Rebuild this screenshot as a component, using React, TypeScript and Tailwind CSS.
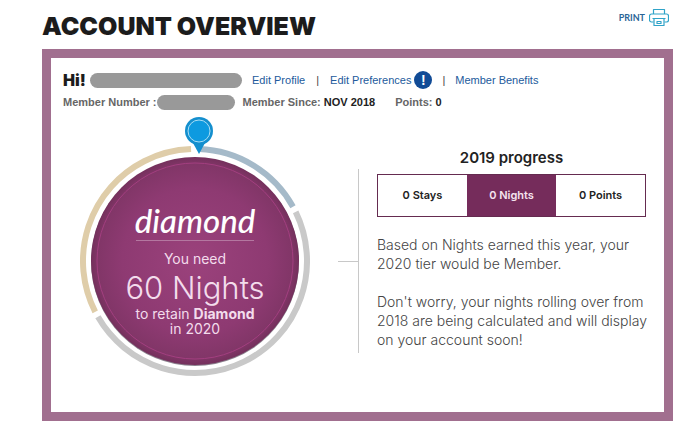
import type { FC } from "react";

const tabs = [
  { label: "0 Stays", active: false },
  { label: "0 Nights", active: true },
  { label: "0 Points", active: false },
];

// start angle and sweep in degrees, clockwise from the top
const arcs = [
  { color: "#a5bac9", start: 2, sweep: 59 },
  { color: "#c9c9c9", start: 64, sweep: 176 },
  { color: "#dfcda9", start: 243, sweep: 115 },
];

const PrinterIcon: FC = () => (
  <svg
    className="h-5 w-5"
    viewBox="0 0 20 20"
    fill="none"
    stroke="#2fa3c8"
    strokeWidth="1.2"
    strokeLinejoin="round"
    aria-hidden="true"
  >
    <path d="M4.5 6V1.5h11V6" />
    <path d="M4.5 14H2.5a2 2 0 0 1-2-2V8a2 2 0 0 1 2-2h15a2 2 0 0 1 2 2v4a2 2 0 0 1-2 2h-2" />
    <path d="M5 10.5h10v7H5zM3.5 10.5h13M8 13.5h4v2H8z" />
  </svg>
);

const Dial: FC = () => (
  <div className="relative h-[261px] w-[230px] shrink-0">
    <svg className="h-full w-full" viewBox="0 0 230 261" aria-hidden="true">
      <defs>
        <radialGradient id="plum">
          <stop offset="0" stopColor="#9b427c" />
          <stop offset="0.7" stopColor="#8e3a72" />
          <stop offset="0.93" stopColor="#823668" />
          <stop offset="1" stopColor="#74305c" />
        </radialGradient>
      </defs>
      {arcs.map((arc) => (
        <circle
          key={arc.color}
          cx="115"
          cy="145"
          r="112"
          fill="none"
          stroke={arc.color}
          strokeWidth="6"
          pathLength="360"
          strokeDasharray={`${arc.sweep} ${360 - arc.sweep}`}
          transform={`rotate(${arc.start - 90} 115 145)`}
        />
      ))}
      <circle cx="115" cy="146" r="104" fill="#8d8590" />
      <circle cx="115" cy="145" r="104" fill="url(#plum)" />
      <circle cx="115" cy="145" r="98" fill="none" stroke="#a33f80" />
      <path d="M113 27h12l-6 11z" fill="#148fce" />
      <circle cx="119" cy="15" r="14" fill="#148fce" />
      <circle cx="119" cy="15" r="11" fill="#0d9ae0" stroke="#a8def5" />
    </svg>
    <div className="absolute inset-x-0 top-[84px] flex flex-col items-center font-['Inter',sans-serif] text-sm leading-[15px] text-[#f3dcec]">
      <div className="flex w-[118px] justify-center border-b border-[#b477a0] font-['Lato',sans-serif] text-[33px] leading-10 font-medium text-white italic">
        diamond
      </div>
      <div className="mt-2.5">You need</div>
      <div className="mt-1 text-[31px] leading-9 font-light">60 Nights</div>
      <div>
        to retain <strong>Diamond</strong>
      </div>
      <div>in 2020</div>
    </div>
  </div>
);

const App: FC = () => {
  return (
    <main className="bg-white pr-[27px] pl-[42px] font-['Liberation_Sans',sans-serif] text-[11px] text-[#666]">
      <header className="flex h-[49px] items-start justify-between">
        <h1 className="pt-2.5 font-['Inter',sans-serif] text-[25px] leading-8 font-black text-[#1c1c1c]">
          ACCOUNT OVERVIEW
        </h1>
        <button
          type="button"
          className="flex items-center gap-1 pt-2 pr-1 font-['Lato',sans-serif] text-[9px] font-bold text-[#2a6496]"
        >
          PRINT
          <PrinterIcon />
        </button>
      </header>

      <section className="border-[9px] border-[#a16f8f] pt-3 pb-[35px]">
        <div className="flex h-5 items-center pl-3 text-[#225a9c]">
          <h2 className="w-6 font-['Inter',sans-serif] text-base font-black text-[#1c1c1c]">
            Hi!
          </h2>
          <span className="ml-[3px] h-[15px] w-[152px] rounded-full bg-[#999]" />
          <a href="#profile" className="ml-2.5">
            Edit Profile
          </a>
          <span className="mx-[11px] text-[#444]">|</span>
          <a href="#preferences">Edit Preferences</a>
          <span className="ml-[3px] flex h-[18px] w-[18px] items-center justify-center rounded-full bg-[#114b96] text-sm font-bold text-white">
            !
          </span>
          <span className="mx-2.5 text-[#444]">|</span>
          <a href="#benefits">Member Benefits</a>
        </div>
        <div className="mt-0.5 flex h-5 items-center pl-3 font-bold">
          <span>Member Number :</span>
          <span className="h-[15px] w-[78px] rounded-full bg-[#999]" />
          <span className="ml-2">
            Member Since: <span className="text-[#222]">NOV 2018</span>
          </span>
          <span className="ml-5">
            Points: <span className="text-[#222]">0</span>
          </span>
        </div>

        <div className="mt-1 flex items-start pr-[18px] pl-[29px]">
          <Dial />
          <div className="mt-[145px] ml-7 h-px w-5 shrink-0 bg-[#c8c8c8]" />
          <div className="mt-[53px] h-[184px] w-px shrink-0 bg-[#c8c8c8]" />
          <div className="ml-[18px] min-w-0 flex-1 pt-8 font-['Inter',sans-serif]">
            <h3 className="text-center text-[15px] leading-5 font-semibold text-[#222]">
              2019 progress
            </h3>
            <div className="mt-1.5 grid h-[43px] grid-cols-3 border border-[#652b50] text-[11px] font-semibold text-[#222]">
              {tabs.map((tab) => (
                <button
                  key={tab.label}
                  type="button"
                  className={tab.active ? "bg-[#752c5b] text-[#f5e4ef]" : ""}
                >
                  {tab.label}
                </button>
              ))}
            </div>
            <div className="-mr-2 mt-[18px] text-sm leading-[19px] font-light text-[#444]">
              <p>Based on Nights earned this year, your 2020 tier would be Member.</p>
              <p className="mt-[19px]">
                Don't worry, your nights rolling over from 2018 are being
                calculated and will display on your account soon!
              </p>
            </div>
          </div>
        </div>
      </section>
    </main>
  );
};

export default App;
